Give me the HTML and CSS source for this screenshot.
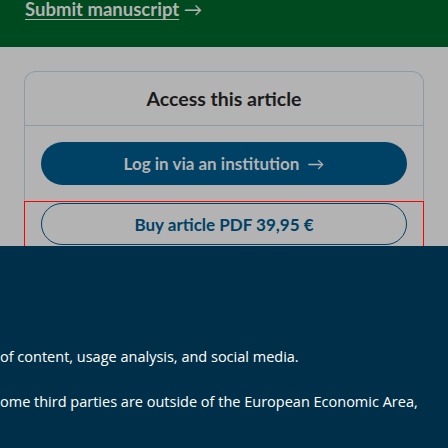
FILE: index.html
```html
<!DOCTYPE html>
<html>
<head>
<meta charset="utf-8">
<link rel="stylesheet" href="styles.css">
</head>
<body>
<header class="topbar">
  <a class="submit" href="#"><span class="submit-text">Submit manuscript</span> <span class="arrow">&rarr;</span></a>
</header>
<main class="page">
  <section class="card">
    <h2 class="card-title">Access this article</h2>
    <div class="card-body">
      <a class="btn btn-primary" href="#">Log in via an institution <span class="btn-arrow">&rarr;</span></a>
      <form class="buy-form">
        <button type="button" class="btn btn-outline">Buy article PDF 39,95 €</button>
      </form>
    </div>
  </section>
</main>
<div class="cookie-banner">
  <p class="cookie-text">of content, usage analysis, and social media.</p>
  <p class="cookie-text">ome third parties are outside of the European Economic Area,</p>
</div>
</body>
</html>
```

FILE: styles.css
```css
html, body {
  margin: 0;
  padding: 0;
}
body {
  width: 448px;
  height: 448px;
  overflow: hidden;
  background: #b3b3b3;
  font-family: Lato, "Liberation Sans", sans-serif;
  display: flex;
  flex-direction: column;
}
.topbar {
  height: 47px;
  flex: none;
  background: #004a1f;
  padding-left: 25px;
  box-sizing: border-box;
}
.submit {
  display: inline-block;
  margin-top: -4px;
  color: #b3b3b3;
  font-size: 18.5px;
  font-weight: 700;
  line-height: 22px;
  text-decoration: none;
}
.submit-text {
  text-decoration: underline;
  text-underline-offset: 3px;
  text-decoration-thickness: 1px;
}
.arrow {
  font-weight: 400;
}
.page {
  flex: none;
  padding: 24px 24px 0 24px;
}
.card {
  border: 1px solid #8f9ba3;
  border-bottom: none;
  border-radius: 12px 12px 0 0;
}
.card-title {
  margin: 0;
  height: 53px;
  line-height: 53px;
  text-align: center;
  font-size: 19.5px;
  font-weight: 700;
  color: #1b1b1b;
  border-bottom: 1px solid #8f9ba3;
}
.card-body {
  padding-top: 16px;
  display: flex;
  flex-direction: column;
  gap: 17px;
}
.btn {
  box-sizing: border-box;
  height: 43px;
  border-radius: 22px;
  display: flex;
  align-items: center;
  justify-content: center;
  font-family: Lato, "Liberation Sans", sans-serif;
  font-size: 17px;
  font-weight: 700;
  text-decoration: none;
}
.btn-primary {
  margin: 0 16px;
  background: #004166;
  color: #b3b3b3;
}
.btn-arrow {
  font-weight: 400;
  margin-left: 8px;
}
.buy-form {
  margin: 0;
  outline: 1px solid #ff0000;
  padding: 1px 16px 1px;
}
.btn-outline {
  width: 100%;
  height: 42px;
  background: transparent;
  border: 1.5px solid #004166;
  color: #004166;
}
.cookie-banner {
  flex: 1;
  background: #003049;
  padding-top: 100px;
  overflow: hidden;
}
.cookie-text {
  margin: 0 0 23px 0;
  color: #ffffff;
  font-family: "Open Sans", sans-serif;
  font-size: 14.5px;
  line-height: 22px;
  white-space: nowrap;
}
```
